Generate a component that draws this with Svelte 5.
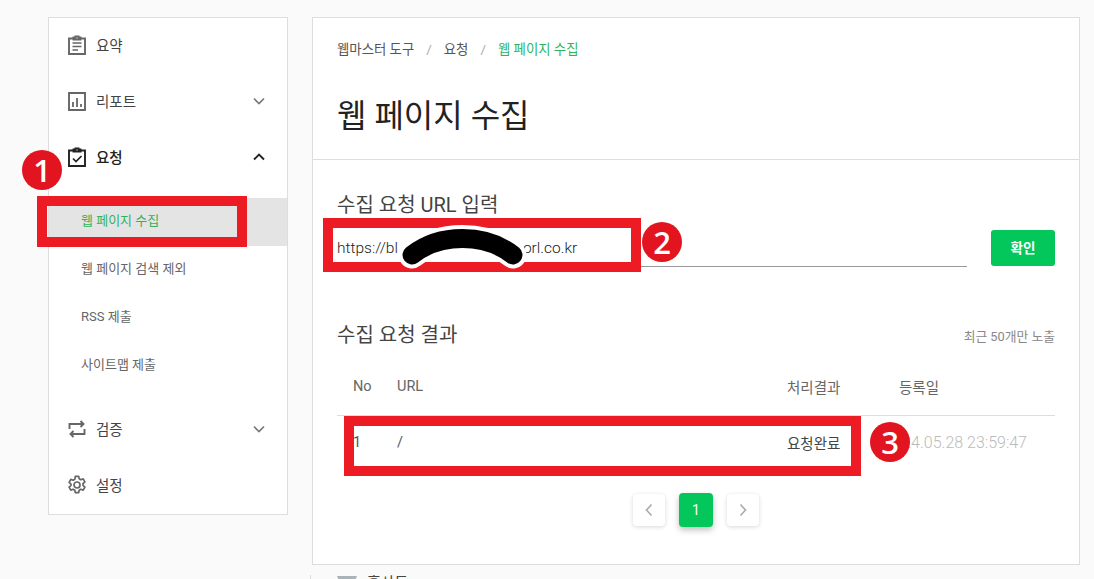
<script>
  const sub = [
    { label: '웹 페이지 수집', active: true },
    { label: '웹 페이지 검색 제외' },
    { label: 'RSS 제출' },
    { label: '사이트맵 제출' }
  ];
</script>

<div class="page">
  <aside class="side">
    <div class="item">
      <svg class="ico" viewBox="0 0 20 20"><path d="M6.500 3.500H2V19h16V3.500h-4.500M6.500 4.500v-2h2v-1h3v1h2v2z" fill="none" stroke="#666" stroke-width="1.900"/><path d="M5.500 8h9M5.500 11.500h9M5.500 15h5.500" stroke="#666" stroke-width="1.700"/></svg>
      <span>요약</span>
    </div>
    <div class="item">
      <svg class="ico" viewBox="0 0 20 20"><path d="M2 2h16v17H2z" fill="none" stroke="#666" stroke-width="1.900"/><path d="M6 11v5M10 7v9M14 13v3" stroke="#666" stroke-width="1.800"/></svg>
      <span>리포트</span>
      <svg class="chev" viewBox="0 0 12 8"><path d="M1 1.500l5 5 5-5" fill="none" stroke="#777" stroke-width="1.600"/></svg>
    </div>
    <div class="item open">
      <svg class="ico" viewBox="0 0 20 20"><path d="M6.500 3.500H2V19h16V3.500h-4.500M6.500 4.500v-2h2v-1h3v1h2v2z" fill="none" stroke="#222" stroke-width="1.900"/><path d="M6 11.500l3 3 5.500-5.500" fill="none" stroke="#222" stroke-width="1.700"/></svg>
      <span>요청</span>
      <svg class="chev" viewBox="0 0 12 8"><path d="M1 6.500l5-5 5 5" fill="none" stroke="#222" stroke-width="1.900"/></svg>
    </div>
    <ul class="sub">
      {#each sub as s}
        <li class:active={s.active}>{s.label}</li>
      {/each}
    </ul>
    <div class="item">
      <svg class="ico" viewBox="0 0 20 20"><path d="M2.500 10V5H16M13.500 2l3 3-3 3M17.500 10v5H4M6.500 12l-3 3 3 3" fill="none" stroke="#666" stroke-width="1.900"/></svg>
      <span>검증</span>
      <svg class="chev" viewBox="0 0 12 8"><path d="M1 1.500l5 5 5-5" fill="none" stroke="#777" stroke-width="1.600"/></svg>
    </div>
    <div class="item">
      <svg class="ico" viewBox="0 0 20 20"><circle cx="10" cy="10" r="3" fill="none" stroke="#666" stroke-width="1.700"/><path d="M8.300 1.300h3.400l.5 2.500 1.600.9 2.400-.8 1.700 3-1.900 1.700v1.800l1.900 1.700-1.700 3-2.400-.8-1.600.9-.5 2.500H8.300l-.5-2.500-1.600-.9-2.400.8-1.700-3 1.900-1.700V9.100L2.100 7.400l1.700-3 2.400.8 1.600-.9z" fill="none" stroke="#666" stroke-width="1.700" stroke-linejoin="round"/></svg>
      <span>설정</span>
    </div>
  </aside>

  <main class="main">
    <header class="head">
      <nav class="crumbs">
        <span>웹마스터 도구</span><i>/</i><span>요청</span><i>/</i><span class="cur">웹 페이지 수집</span>
      </nav>
      <h1>웹 페이지 수집</h1>
    </header>
    <section class="body">
      <h2>수집 요청 URL 입력</h2>
      <div class="form">
        <div class="input">https://bl<span class="gap"></span>orl.co.kr</div>
        <button class="ok">확인</button>
      </div>
      <div class="res-head">
        <h2>수집 요청 결과</h2>
        <small>최근 50개만 노출</small>
      </div>
      <div class="table">
        <div class="row th"><span class="c1">No</span><span class="c2">URL</span><span class="c3">처리결과</span><span class="c4">등록일</span></div>
        <div class="row td"><span class="c1">1</span><span class="c2">/</span><span class="c3 dark">요청완료</span><span class="c4 date">2024.05.28 23:59:47</span></div>
      </div>
      <div class="pager">
        <button class="pg" aria-label="이전"><svg viewBox="0 0 8 14"><path d="M6.500 1.500L1.500 7l5 5.500" fill="none" stroke="#aaa" stroke-width="1.600"/></svg></button>
        <button class="pg on">1</button>
        <button class="pg" aria-label="다음"><svg viewBox="0 0 8 14"><path d="M1.500 1.500l5 5.500-5 5.500" fill="none" stroke="#aaa" stroke-width="1.600"/></svg></button>
      </div>
    </section>
  </main>

  <div class="below">
    <svg class="below-ico" viewBox="0 0 20 12"><path d="M0 0h20l-5 12H5z" fill="#aab3b8"/></svg>
    <span>홈사등</span>
  </div>

  <div class="box b1"></div>
  <div class="box b2"></div>
  <div class="box b3"></div>
  <svg class="scribble" viewBox="0 0 140 50"><path d="M17 33C45 11 90 11 118 33" fill="none" stroke="#fff" stroke-width="27" stroke-linecap="round"/><path d="M17 33C45 11 90 11 118 33" fill="none" stroke="#000" stroke-width="19" stroke-linecap="round"/></svg>
  <div class="num n1">1</div>
  <div class="num n2">2</div>
  <div class="num n3">3</div>
</div>

<style>
  :global(body) {
    margin: 0;
    background: #fafafa;
    font-family: Roboto, "Noto Sans CJK KR", sans-serif;
    color: #333;
  }
  .page {
    position: relative;
    width: 1094px;
    height: 579px;
    overflow: hidden;
    display: flex;
    align-items: flex-start;
    gap: 24px;
    padding: 17px 0 0 48px;
    box-sizing: border-box;
  }
  .side {
    width: 240px;
    height: 498px;
    box-sizing: border-box;
    background: #fff;
    border: 1px solid #ddd;
    flex: none;
  }
  .item {
    display: flex;
    align-items: center;
    height: 56px;
    box-sizing: border-box;
    padding: 0 0 4px 18px;
    font-size: 14.500px;
    color: #444;
    gap: 9px;
  }
  .ico { margin-top: 2px; }
  .chev { margin-top: 2px; }
  .item.open { color: #222; font-weight: 500; }
  .ico { width: 20px; height: 20px; flex: none; }
  .chev { width: 12px; height: 8px; margin-left: auto; margin-right: 22px; }
  .sub { list-style: none; margin: 0 0 12px; padding: 12px 0 0; }
  .sub li {
    height: 48px;
    line-height: 46px;
    padding-left: 32px;
    font-size: 13px;
    color: #666;
  }
  .sub li.active { background: #e4e4e4; color: #2fb35f; }

  .main {
    width: 768px;
    height: 548px;
    box-sizing: border-box;
    background: #fff;
    border: 1px solid #ddd;
    flex: none;
  }
  .head { height: 142px; border-bottom: 1px solid #ddd; padding: 0 24px; box-sizing: border-box; }
  .crumbs { display: flex; align-items: center; gap: 12px; font-size: 13.400px; color: #555; padding-top: 22px; line-height: 20px; }
  .crumbs i { font-style: normal; color: #aaa; }
  .cur { color: #2fb35f; }
  h1 { margin: 34px 0 0; font-size: 32px; font-weight: 400; color: #222; line-height: 44px; }
  .body { padding: 32px 24px 0; }
  h2 { margin: 0; font-size: 20px; font-weight: 400; color: #444; line-height: 26px; }
  .form { display: flex; align-items: flex-end; justify-content: space-between; height: 49px; }
  .input { width: 630px; height: 33px; box-sizing: border-box; border-bottom: 1px solid #999; line-height: 28px; font-size: 15.500px; font-weight: 300; color: #222; white-space: nowrap; }
  .gap { display: inline-block; width: 125px; }
  .ok {
    width: 64px; height: 36px; border: 0; border-radius: 3px;
    background: #03c75a; color: #fff; font: 700 13.500px "Noto Sans CJK KR", sans-serif;
    margin-bottom: 1px; padding: 0 0 3px;
  }
  .res-head { display: flex; justify-content: space-between; align-items: center; margin-top: 55px; }
  small { font-size: 12.800px; color: #888; }
  .table { margin-top: 13px; }
  .row { display: flex; align-items: center; font-size: 14.500px; }
  .th { height: 55px; border-bottom: 1px solid #ddd; color: #666; padding-bottom: 4px; box-sizing: border-box; }
  .td { height: 52px; color: #555; }
  .c1 { width: 60px; flex: none; padding-left: 16px; box-sizing: border-box; }
  .c2 { width: 390px; flex: none; }
  .c3 { width: 112px; flex: none; }
  .c4 { flex: 1; white-space: nowrap; }
  .dark { color: #444; font-weight: 400; }
  .date { color: #bbb; font-weight: 300; font-size: 16px; text-align: right; padding-right: 28px; margin-left: -20px; }
  .pager { display: flex; justify-content: center; gap: 14px; margin-top: 25px; align-items: center; }
  .pg {
    width: 32px; height: 32px; border: 0; border-radius: 4px; background: #fff;
    box-shadow: 0 1px 4px rgba(0,0,0,.16); padding: 0;
    display: flex; align-items: center; justify-content: center;
    font: 400 14px Roboto, sans-serif;
  }
  .pg svg { width: 8px; height: 14px; }
  .pg.on { width: 34px; height: 34px; background: #03c75a; color: #fff; box-shadow: 0 3px 6px rgba(0,0,0,.25); }

  .below { position: absolute; left: 310px; top: 575px; height: 16px; display: flex; gap: 10px; font-size: 15px; color: #444; line-height: 16px; border-left: 1px solid #ddd; padding-left: 26px; }
  .below-ico { width: 20px; height: 12px; margin-top: 1px; }

  .box { position: absolute; border: 10px solid #ed1c24; box-sizing: border-box; }
  .b1 { left: 37px; top: 196px; width: 210px; height: 51px; }
  .b2 { left: 323px; top: 218px; width: 318px; height: 54px; }
  .b3 { left: 344px; top: 416px; width: 517px; height: 60px; }
  .scribble { position: absolute; left: 395px; top: 222px; width: 140px; height: 50px; }
  .num {
    position: absolute; width: 40px; height: 40px; border-radius: 50%;
    background: #e2141f; color: #fff; display: flex; align-items: center; justify-content: center;
    font: 600 31px "Open Sans", sans-serif;
  }
  .n1 { left: 22px; top: 150px; }
  .n2 { left: 642px; top: 222px; }
  .n3 { left: 870px; top: 422px; }
</style>
